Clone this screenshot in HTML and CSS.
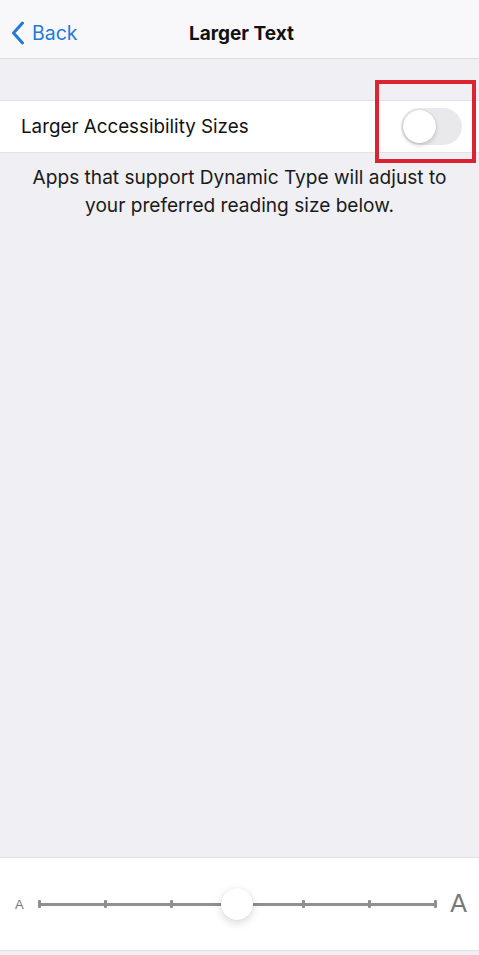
FILE: index.html
```html
<!DOCTYPE html>
<html>
<head>
<meta charset="utf-8">
<link rel="stylesheet" href="styles.css">
</head>
<body>
<div class="screen">
  <header class="nav">
    <div class="back">
      <svg class="chev" width="14" height="24" viewBox="0 0 14 24"><path d="M11.5 2 L2.5 12 L11.5 22" fill="none" stroke="#2479d8" stroke-width="3" stroke-linecap="round" stroke-linejoin="round"/></svg>
      <span>Back</span>
    </div>
    <div class="title">Larger Text</div>
  </header>
  <div class="spacer"></div>
  <div class="row">
    <span class="label">Larger Accessibility Sizes</span>
    <div class="toggle"><div class="knob"></div></div>
    <div class="highlight"></div>
  </div>
  <p class="footer">Apps that support Dynamic Type will adjust to your preferred reading size below.</p>
  <div class="fill"></div>
  <div class="panel">
    <span class="a-small">A</span>
    <div class="track">
      <i></i><i></i><i></i><i></i><i></i><i></i><i></i>
      <div class="thumb"></div>
    </div>
    <span class="a-large">A</span>
  </div>
  <div class="bottom"></div>
</div>
</body>
</html>
```
FILE: styles.css
```css
* { box-sizing: border-box; }
html, body { margin: 0; padding: 0; }
body {
  font-family: "Inter", "Liberation Sans", sans-serif;
  background: #efeff4;
  color: #111;
}
.screen {
  width: 479px;
  height: 955px;
  display: flex;
  flex-direction: column;
  background: #efeff4;
  overflow: hidden;
}
.nav {
  height: 59px;
  flex: none;
  background: #f8f8fa;
  border-bottom: 1px solid #dcdce0;
  position: relative;
  display: flex;
  align-items: center;
}
.back {
  display: flex;
  align-items: center;
  padding-left: 11px;
  color: #2479d8;
  font-size: 19.5px;
  gap: 7px;
  padding-top: 8px;
}
.chev { display: block; }
.title {
  position: absolute;
  left: 0; right: 0;
  top: 0; bottom: 0;
  display: flex;
  align-items: center;
  justify-content: center;
  font-weight: 700;
  font-size: 19px;
  padding-top: 8px;
  padding-left: 4px;
  pointer-events: none;
}
.spacer { height: 41px; flex: none; }
.row {
  height: 53px;
  flex: none;
  background: #fff;
  border-top: 1px solid #e2e2e6;
  border-bottom: 1px solid #e2e2e6;
  display: flex;
  align-items: center;
  justify-content: space-between;
  padding: 0 17px 0 21px;
  position: relative;
}
.label { font-size: 18.8px; color: #111; }
.toggle {
  width: 61px;
  height: 37px;
  border-radius: 19px;
  background: #e9e9ec;
  padding: 2px;
  display: flex;
  align-items: center;
}
.knob {
  width: 33px;
  height: 33px;
  border-radius: 50%;
  background: #fff;
  box-shadow: 0 2px 4px rgba(0,0,0,0.18), 0 0 1px rgba(0,0,0,0.2);
}
.highlight {
  position: absolute;
  left: 375px;
  top: -21px;
  width: 101px;
  height: 83px;
  border: 4px solid #dc2430;
}
.footer {
  margin: 10px 0 0;
  padding: 0 16px;
  text-align: center;
  font-size: 19.1px;
  line-height: 28px;
  color: #1a1a1a;
}
.fill { flex: 1; }
.panel {
  height: 94px;
  flex: none;
  background: #fff;
  border-top: 1px solid #e2e2e6;
  border-bottom: 1px solid #e2e2e6;
  display: flex;
  align-items: center;
  padding: 0 12px 0 15px;
}
.a-small {
  font-size: 13px;
  color: #777;
  width: 23px;
  font-family: "Liberation Sans", sans-serif;
}
.track {
  flex: 1;
  position: relative;
  height: 8px;
  display: flex;
  justify-content: space-between;
  align-items: center;
  background: linear-gradient(#8e8e93, #8e8e93) center / 100% 3px no-repeat;
  margin-right: 13px;
}
.track i {
  display: block;
  width: 3px;
  height: 8px;
  background: #8e8e93;
  border-radius: 1px;
}
.thumb {
  position: absolute;
  left: 183px;
  top: 50%;
  width: 32px;
  height: 32px;
  margin-top: -16px;
  border-radius: 50%;
  background: #fff;
  box-shadow: 0 3px 8px rgba(0,0,0,0.15), 0 0 1px rgba(0,0,0,0.15);
}
.a-large {
  font-size: 25px;
  color: #777;
  font-family: "Liberation Sans", sans-serif;
  padding-bottom: 1px;
}
.bottom { height: 4px; flex: none; background: #efeff4; }
```
